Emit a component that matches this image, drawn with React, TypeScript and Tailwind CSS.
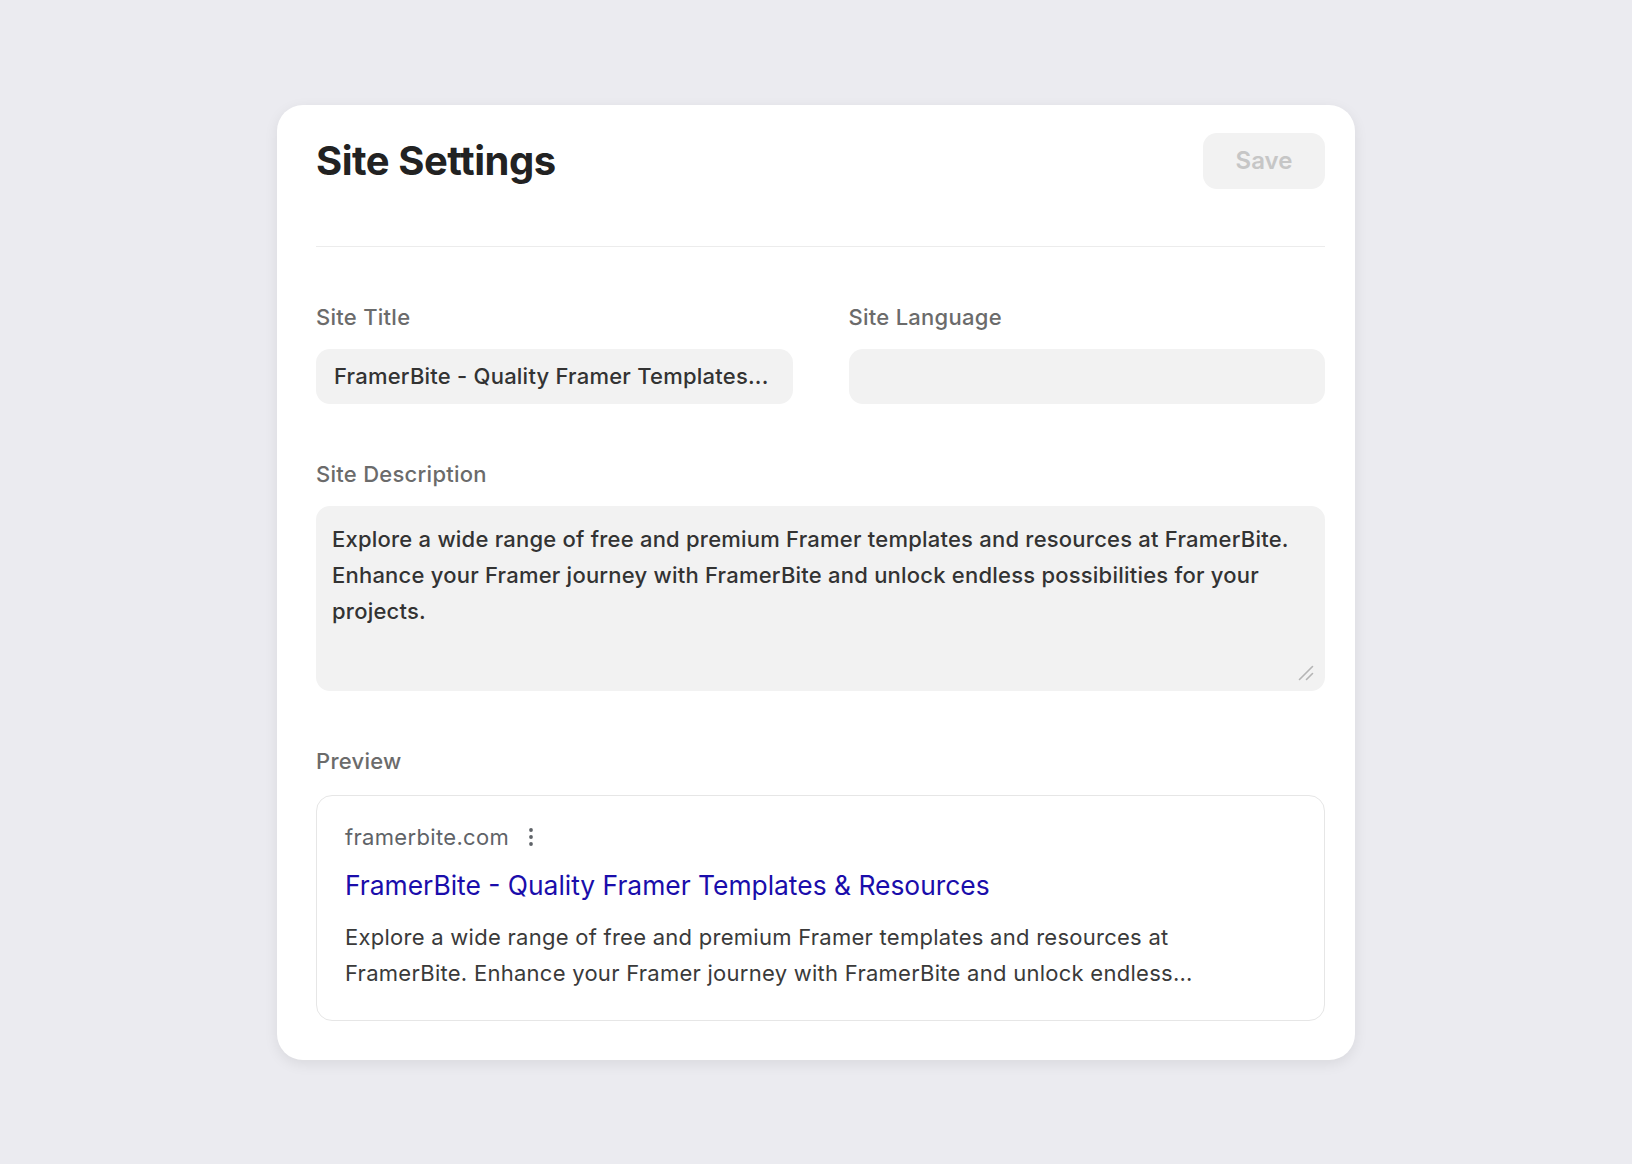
import React from "react";

function Kebab() {
  return (
    <svg width="6" height="20" viewBox="0 0 6 20" className="ml-[19px]" aria-hidden="true">
      <circle cx="3" cy="3" r="1.9" fill="#5f6368" />
      <circle cx="3" cy="10" r="1.9" fill="#5f6368" />
      <circle cx="3" cy="17" r="1.9" fill="#5f6368" />
    </svg>
  );
}

function ResizeGrip() {
  return (
    <svg
      width="16"
      height="16"
      viewBox="0 0 16 16"
      className="absolute right-[11px] bottom-[10px] pointer-events-none"
      aria-hidden="true"
    >
      <line x1="1.5" y1="14.5" x2="14.5" y2="1.5" stroke="#b5b5b5" strokeWidth="1.6" strokeLinecap="round" />
      <line x1="8.5" y1="14.5" x2="14.5" y2="8.5" stroke="#b5b5b5" strokeWidth="1.6" strokeLinecap="round" />
    </svg>
  );
}

export default function App() {
  return (
    <div
      className="min-h-screen w-full flex items-center justify-center bg-[#ebebf0]"
      style={{ fontFamily: "Inter, 'Noto Sans', sans-serif" }}
    >
      <div className="w-[1078px] bg-white rounded-[26px] shadow-[0_4px_14px_rgba(0,0,0,0.08)] pl-[39px] pr-[30px] pt-[28px] pb-[39px]">
        <div className="flex items-center justify-between h-[56px]">
          <h1 className="text-[40px] leading-[48px] font-bold tracking-[-0.012em] text-[#222222]">
            Site Settings
          </h1>
          <button className="h-[56px] w-[122px] rounded-[14px] bg-[#f2f2f2] text-[24px] font-semibold text-[#c6c6c6]">
            Save
          </button>
        </div>
        <div className="mt-[57px] h-px bg-[#ececec]" />

        <div className="pt-[56px] flex flex-col gap-[56px]">
          <div className="grid grid-cols-2 gap-[56px]">
            <div className="flex flex-col gap-[18px]">
              <label className="text-[22px] leading-[28px] font-[450] tracking-[0.012em] text-[#6b6b6b]">Site Title</label>
              <div className="h-[55px] rounded-[14px] bg-[#f2f2f2] px-[18px] flex items-center">
                <span className="block whitespace-nowrap text-[22px] font-[450] tracking-[0.01em] text-[#333333]">
                  FramerBite - Quality Framer Templates...
                </span>
              </div>
            </div>
            <div className="flex flex-col gap-[18px]">
              <label className="text-[22px] leading-[28px] font-[450] tracking-[0.012em] text-[#6b6b6b]">Site Language</label>
              <div className="h-[55px] rounded-[14px] bg-[#f2f2f2]" />
            </div>
          </div>

          <div className="flex flex-col gap-[18px]">
            <label className="text-[22px] leading-[28px] font-[450] tracking-[0.012em] text-[#6b6b6b]">Site Description</label>
            <div className="relative">
              <textarea
                className="block h-[185px] w-full resize-none rounded-[14px] bg-[#f2f2f2] px-[16px] pt-[15px] pb-[16px] text-[22px] leading-[36px] font-[450] tracking-[0.01em] text-[#333333] outline-none"
                defaultValue="Explore a wide range of free and premium Framer templates and resources at FramerBite. Enhance your Framer journey with FramerBite and unlock endless possibilities for your projects."
              />
              <ResizeGrip />
            </div>
          </div>

          <div className="flex flex-col gap-[20px]">
            <label className="text-[22px] leading-[28px] font-[450] tracking-[0.012em] text-[#6b6b6b]">Preview</label>
            <div className="rounded-[16px] border border-[#e6e6e6] bg-white px-[28px] pt-[27px] pb-[29px]">
              <div className="flex items-center h-[28px]">
                <span className="text-[22px] leading-[28px] tracking-[0.015em] text-[#5f6368]">framerbite.com</span>
                <Kebab />
              </div>
              <div className="mt-[17px] text-[26.4px] leading-[34px] text-[#1a0dab]">
                FramerBite - Quality Framer Templates &amp; Resources
              </div>
              <p className="mt-[17px] max-w-[900px] text-[22px] leading-[36px] tracking-[0.012em] text-[#3a3a3a]">
                Explore a wide range of free and premium Framer templates and resources at FramerBite. Enhance your Framer journey with FramerBite and unlock endless...
              </p>
            </div>
          </div>
        </div>
      </div>
    </div>
  );
}
